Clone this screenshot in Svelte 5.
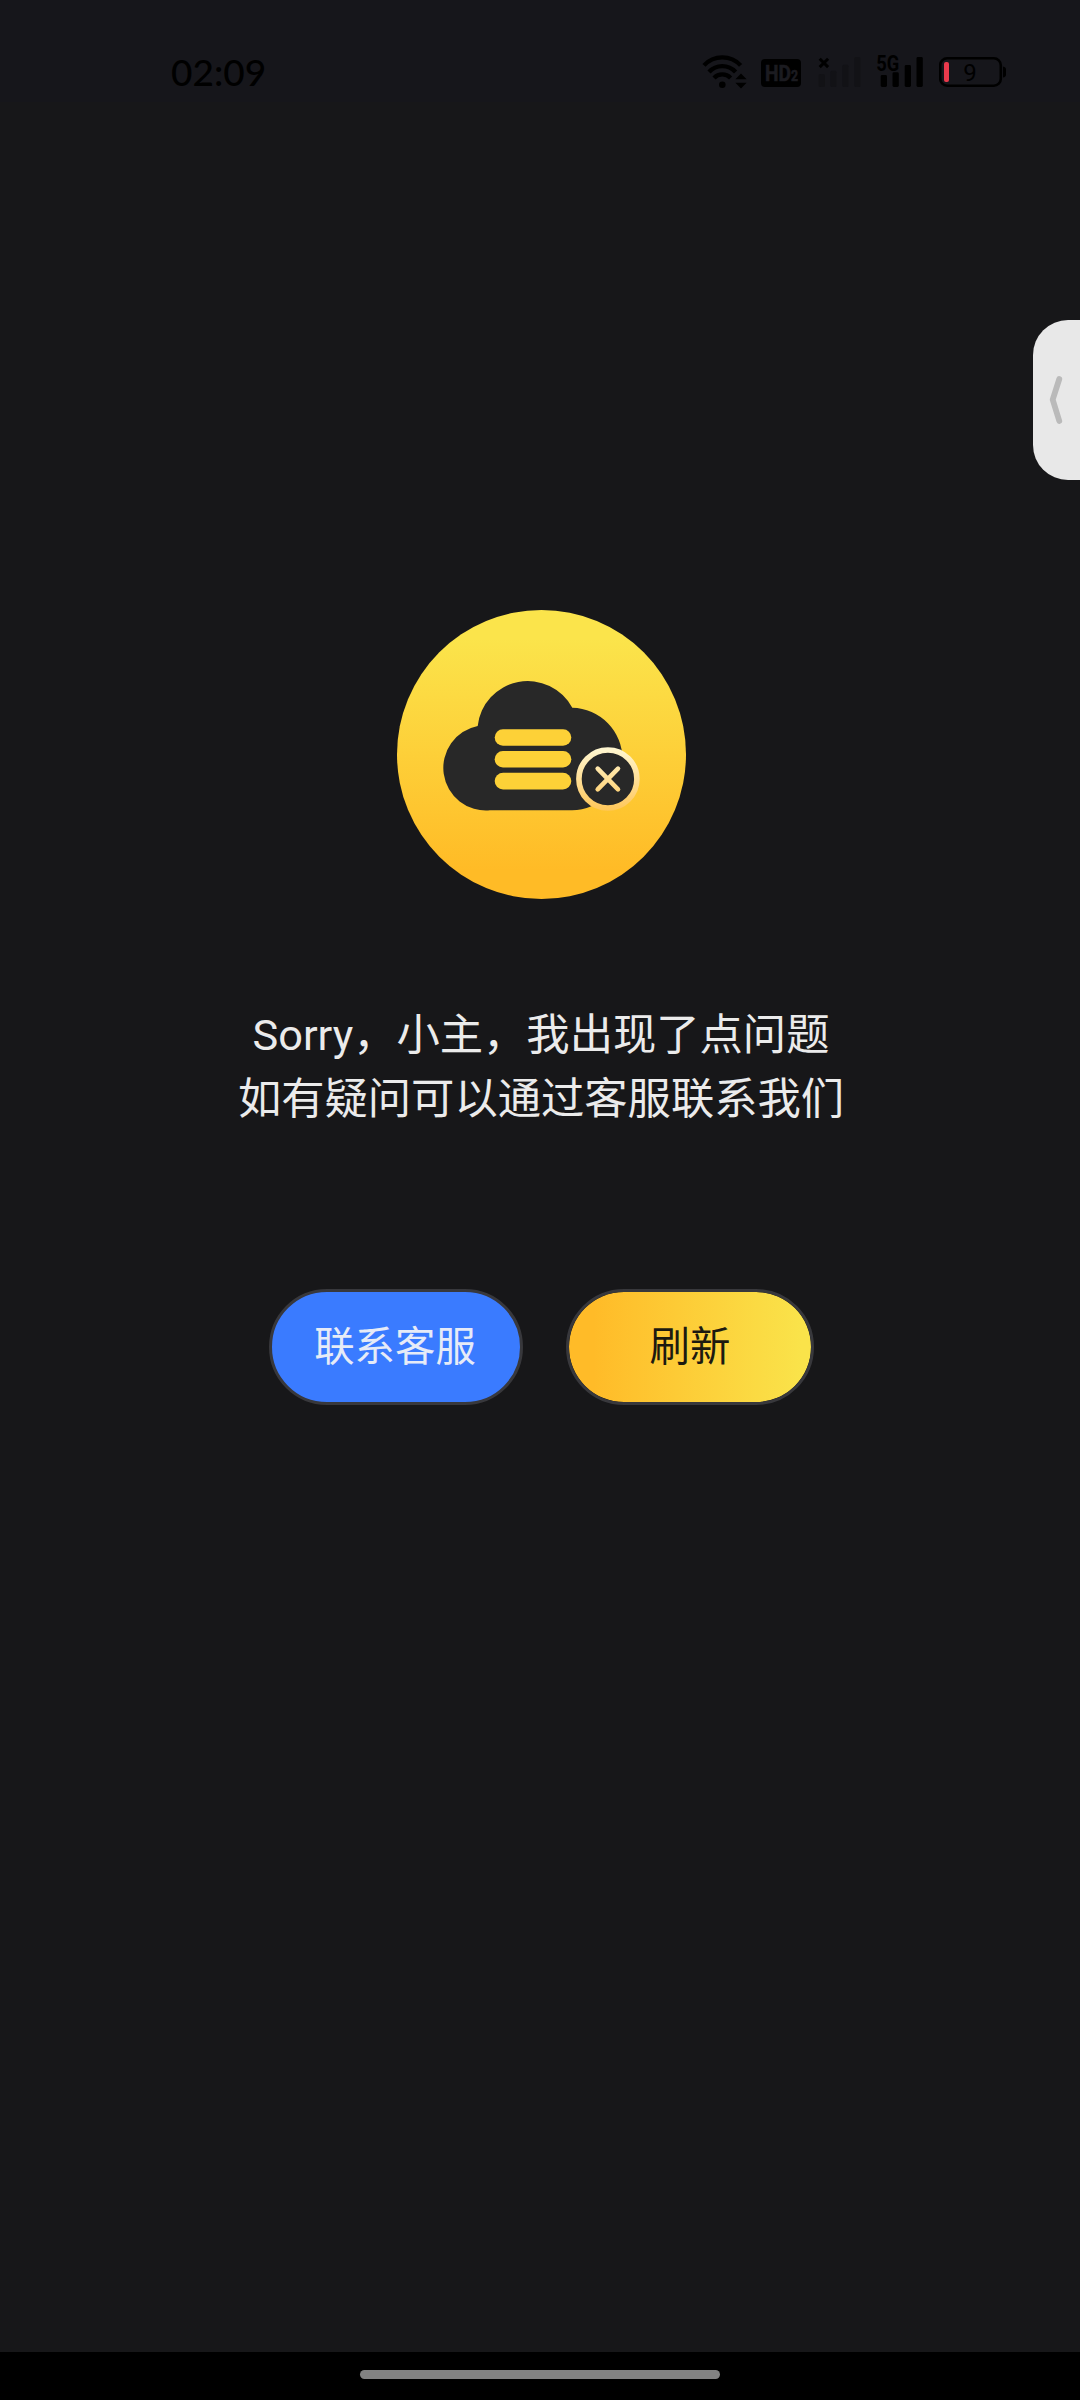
<script>
  let { onContact, onRefresh, onExpand } = $props();

  const time = '02:09';
  const battery = 9;
  const lines = ['Sorry，小主，我出现了点问题', '如有疑问可以通过客服联系我们'];
</script>

<div class="screen">
  <header class="status">
    <span class="status__time">{time}</span>
    <div class="status__icons">
      <svg class="wifi" width="46" height="38" viewBox="0 0 46 38" aria-hidden="true">
        <g fill="none" stroke="#000" stroke-width="4.3">
          <path d="M2 13.4A25 25 0 0 1 38.6 13.4" />
          <path d="M7 20A18 18 0 0 1 33.6 20" />
          <path d="M12 26A11.5 11.5 0 0 1 28.6 26" />
        </g>
        <circle cx="20.3" cy="32.7" r="3.3" />
        <path d="M33.4 27.3L39 21.5l5.6 5.8zM33.4 30.7L39 36.5l5.6-5.8z" />
      </svg>

      <svg class="hd" width="40" height="38" viewBox="0 0 40 38" aria-hidden="true">
        <rect y="7" width="40" height="28" rx="4" />
        <text x="4" y="29" font-size="22" textLength="33" lengthAdjust="spacingAndGlyphs">HD<tspan font-size="14">2</tspan></text>
      </svg>

      <svg class="signal signal--off" width="44" height="38" viewBox="0 0 44 38" aria-hidden="true">
        <g fill="#121216">
          <rect x="0.7" y="22" width="6.2" height="13" rx="1.6" />
          <rect x="12.3" y="18.7" width="6.2" height="16.3" rx="1.6" />
          <rect x="24.3" y="12.7" width="6.2" height="22.3" rx="1.6" />
          <rect x="36.3" y="5" width="6.2" height="30" rx="1.6" />
        </g>
        <path d="M1.7 6.7l8.4 8.4M10.1 6.7l-8.4 8.4" stroke="#000" stroke-width="3" />
      </svg>

      <svg class="signal" width="47" height="38" viewBox="0 0 47 38" aria-hidden="true">
        <text x="0.3" y="18.6" font-size="21.5" textLength="23" lengthAdjust="spacingAndGlyphs">5G</text>
        <rect x="4.7" y="23" width="6.3" height="12" rx="1.4" />
        <rect x="16.5" y="20.3" width="6.3" height="14.7" rx="1.4" />
        <rect x="28.7" y="13" width="6.3" height="22" rx="1.4" />
        <rect x="40.5" y="5" width="6.3" height="30" rx="1.4" />
      </svg>

      <svg class="battery" width="67" height="38" viewBox="0 0 67 38" aria-hidden="true">
        <rect x="1.2" y="6.3" width="60.6" height="27.4" rx="7" fill="none" stroke="#000" stroke-width="2.6" />
        <rect x="5" y="10" width="5" height="20" rx="2" fill="#ea3a4c" />
        <text x="31" y="28.8" font-size="24" text-anchor="middle">{battery}</text>
        <path d="M64 14.5q3 .5 3 3v5q0 2.5-3 3z" />
      </svg>
    </div>
  </header>

  <main class="content">
    <svg class="hero" width="289" height="289" viewBox="0 0 289 289" aria-hidden="true">
      <defs>
        <linearGradient id="sun" x1="0" y1="0" x2="0" y2="1">
          <stop offset="0.1" stop-color="#fbe44b" />
          <stop offset="0.9" stop-color="#ffbb26" />
        </linearGradient>
        <linearGradient id="ring" gradientUnits="userSpaceOnUse" x1="0" y1="138" x2="0" y2="200">
          <stop offset="0" stop-color="#fff7d2" />
          <stop offset="1" stop-color="#ffc75a" />
        </linearGradient>
      </defs>
      <circle cx="144.5" cy="144.5" r="144.5" fill="url(#sun)" />
      <path
        d="M93 200.3A42.65 42.65 0 0 1 80.7 116A50.4 50.4 0 0 1 175.3 97.7A51.31 51.31 0 0 1 175 200.3Z"
        fill="#282828"
      />
      <g fill="#fdd137">
        <rect x="97.7" y="119.3" width="76.6" height="16.4" rx="8.2" />
        <rect x="97.7" y="141" width="76.6" height="16.4" rx="8.2" />
        <rect x="97.7" y="162.7" width="76.6" height="16.8" rx="8.4" />
      </g>
      <g stroke="url(#ring)">
        <circle cx="210.9" cy="169" r="29" fill="#282828" stroke-width="5.6" />
        <path d="M200.7 158.7L221 179.3M221 158.7L200.7 179.3" fill="none" stroke-width="4.6" stroke-linecap="round" />
      </g>
    </svg>

    <p class="message">
      {#each lines as line}
        <span>{line}</span>
      {/each}
    </p>

    <div class="actions">
      <button class="btn btn--contact" type="button" onclick={() => onContact?.()}>联系客服</button>
      <button class="btn btn--refresh" type="button" onclick={() => onRefresh?.()}>刷新</button>
    </div>
  </main>

  <button class="drawer" type="button" aria-label="展开" onclick={() => onExpand?.()}>
    <svg width="14" height="48" viewBox="0 0 14 48">
      <path d="M10.3 3L3.7 23.7L10.3 45" fill="none" stroke="#bababa" stroke-width="5.8" stroke-linecap="round" stroke-linejoin="round" />
    </svg>
  </button>

  <footer class="nav">
    <div class="nav__handle"></div>
  </footer>
</div>

<style>
  :global(body) {
    margin: 0;
    background: #171719;
  }

  .screen {
    position: relative;
    display: flex;
    flex-direction: column;
    width: 1080px;
    height: 2400px;
    overflow: hidden;
    background: #171719;
    font-family: Roboto, 'Noto Sans CJK SC', sans-serif;
  }

  .status {
    display: flex;
    justify-content: space-between;
    box-sizing: border-box;
    height: 102px;
    padding: 52px 74px 0 171px;
    background: #16161b;
  }

  .status__time {
    font-family: Lato, sans-serif;
    font-size: 37px;
    font-weight: 500;
    line-height: 39px;
    color: #000;
  }

  .status__icons {
    display: flex;
    height: 38px;
  }

  .hd {
    margin-left: 13px;
  }

  .hd text {
    fill: #1b1b20;
    stroke: #1b1b20;
    stroke-width: 0.6;
    font-weight: 700;
  }

  .signal {
    margin-left: 14px;
  }

  .signal--off {
    margin-left: 17px;
  }

  .signal text {
    font-weight: 700;
  }

  .battery {
    margin-left: 16px;
  }

  .content {
    flex: 1;
    display: flex;
    flex-direction: column;
    align-items: center;
    padding-top: 508px;
  }

  .hero {
    margin-left: 3px;
  }

  .message {
    display: flex;
    flex-direction: column;
    align-items: center;
    margin: 105px 0 0 2px;
    font-size: 43.3px;
    line-height: 64px;
    color: #ebebeb;
  }

  .actions {
    display: flex;
    gap: 43px;
    margin: 157px 0 0 3px;
  }

  .btn {
    box-sizing: border-box;
    height: 116px;
    padding: 0 0 7px;
    border: 3px solid #38383c;
    border-radius: 58px;
    font-family: inherit;
    font-size: 40.4px;
    cursor: pointer;
  }

  .btn--contact {
    width: 254px;
    padding-right: 2px;
    background: #3a7bff;
    color: #e6ebf7;
  }

  .btn--refresh {
    width: 248px;
    background: linear-gradient(90deg, #ffbb28 10%, #fae34a 96%) padding-box;
    color: #1c1a10;
  }

  .drawer {
    position: absolute;
    top: 320px;
    right: 0;
    display: flex;
    align-items: center;
    width: 47px;
    height: 160px;
    padding: 0 0 0 16px;
    border: 0;
    border-radius: 35px 0 0 35px;
    background: #e8e8e8;
    cursor: pointer;
  }

  .nav {
    display: flex;
    justify-content: center;
    align-items: flex-start;
    box-sizing: border-box;
    height: 48px;
    padding-top: 18px;
    background: #000;
  }

  .nav__handle {
    width: 360px;
    height: 9px;
    border-radius: 5px;
    background: #828282;
  }
</style>
